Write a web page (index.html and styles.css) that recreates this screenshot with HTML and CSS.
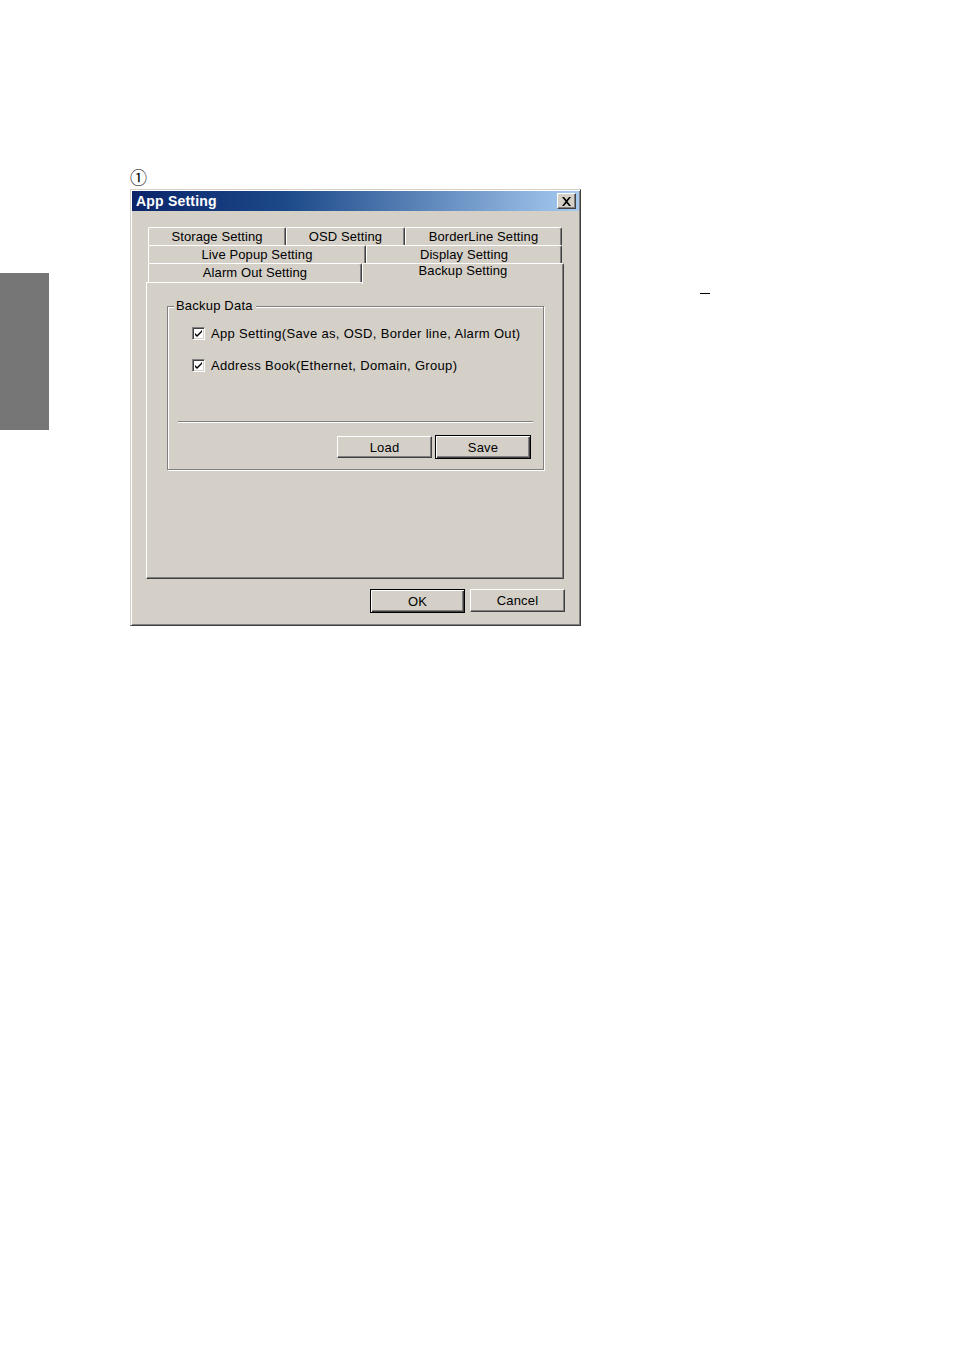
FILE: index.html
```html
<!DOCTYPE html>
<html>
<head>
<meta charset="utf-8">
<link rel="stylesheet" href="styles.css">
</head>
<body>
<div class="page">
  <div class="side"><div class="sidebar"></div></div>
  <div class="main">
    <div class="num">①</div>
    <div class="dialog">
      <div class="titlebar">
        <span class="title">App Setting</span>
        <span class="close"><svg width="11" height="9" viewBox="0 0 11 9"><path d="M1 0h2l2.5 3 2.5-3h2l-3.5 4.5 3.5 4.5h-2l-2.5-3-2.5 3h-2l3.5-4.5z" fill="#000"/></svg></span>
      </div>
      <div class="body">
        <div class="tabs">
          <div class="row r1">
            <div class="tab" style="width:138px">Storage Setting</div>
            <div class="tab" style="width:119px">OSD Setting</div>
            <div class="tab" style="width:157px">BorderLine Setting</div>
          </div>
          <div class="row r2">
            <div class="tab" style="width:218px">Live Popup Setting</div>
            <div class="tab" style="width:196px">Display Setting</div>
          </div>
          <div class="row r3">
            <div class="tab" style="width:214px">Alarm Out Setting</div>
            <div class="tab sel" style="width:202px">Backup Setting</div>
          </div>
        </div>
        <div class="panel">
          <div class="group">
            <div class="legend">Backup Data</div>
            <label class="chk"><span class="box"><svg width="9" height="9" viewBox="0 0 9 9"><path d="M1 4l2 2 5-5v2l-5 5-2-2z" fill="#000"/></svg></span>App Setting(Save as, OSD, Border line, Alarm Out)</label>
            <label class="chk c2"><span class="box"><svg width="9" height="9" viewBox="0 0 9 9"><path d="M1 4l2 2 5-5v2l-5 5-2-2z" fill="#000"/></svg></span>Address Book(Ethernet, Domain, Group)</label>
            <div class="sep"></div>
            <div class="btns">
              <div class="btn">Load</div>
              <div class="btn def">Save</div>
            </div>
          </div>
        </div>
        <div class="footer">
          <div class="btn def big">OK</div>
          <div class="btn big">Cancel</div>
        </div>
      </div>
    </div>
  </div>
  <div class="dash"></div>
</div>
</body>
</html>
```
FILE: styles.css
```css
html, body { margin: 0; padding: 0; background: #fff; }
body { width: 954px; height: 1348px; font-family: "Liberation Sans", Arial, sans-serif; font-size: 13px; color: #000; }
.page { display: flex; align-items: flex-start; }
.side { width: 49px; padding-top: 273px; }
.sidebar { width: 49px; height: 157px; background: #767676; }
.main { margin-left: 81px; padding-top: 166px; display: flex; flex-direction: column; }
.num { font-family: "Noto Sans CJK JP", "DejaVu Sans", sans-serif; font-size: 17px; line-height: 22px; height: 23px; margin-left: 0; }
.dash { width: 10px; height: 1px; background: #000; margin-top: 293px; margin-left: 119px; }
.dialog { width: 451px; height: 437px; box-sizing: border-box; background: #d4d0c8;
  border: 1px solid; border-color: #d4d0c8 #404040 #404040 #d4d0c8; box-shadow: inset 1px 1px 0 #fff, inset -1px -1px 0 #808080; padding: 1px; display: flex; flex-direction: column; }
.titlebar { height: 20px; background: linear-gradient(to right, #0a246a, #1d4a8a 35%, #a6caf0); display: flex; align-items: center; justify-content: space-between; padding: 0 3px 0 4px; }
.title { color: #fff; font-weight: bold; font-size: 14px; letter-spacing: 0.2px; }
.close { width: 19px; height: 16px; box-sizing: border-box; background: #d4d0c8; border: 1px solid; border-color: #fff #404040 #404040 #fff; box-shadow: inset -1px -1px 0 #808080; display: flex; align-items: center; justify-content: center; }
.body { flex: 1; padding: 16px 14px 0 14px; display: flex; flex-direction: column; }
.tabs { display: flex; flex-direction: column; padding-left: 2px; }
.row { display: flex; height: 18px; }
.r3 { height: 19px; align-items: flex-end; }
.tab { box-sizing: border-box; height: 18px; border-top: 1px solid #fff; border-left: 1px solid #fff; border-right: 1px solid #404040; box-shadow: inset -1px 0 0 #808080; border-radius: 2px 2px 0 0; text-align: center; line-height: 17px; letter-spacing: 0.1px; }
.r3 .tab { height: 19px; line-height: 18px; }
.tab.sel { height: 21px; margin-bottom: -2px; line-height: 14px; position: relative; z-index: 1; background: #d4d0c8; }
.panel { height: 297px; box-sizing: border-box; border: 1px solid; border-color: #fff #404040 #404040 #fff; box-shadow: inset -1px -1px 0 #808080; padding: 23px 19px 0 20px; margin-right: 1px; }
.group { position: relative; height: 164px; box-sizing: border-box; border: 1px solid #808080; box-shadow: 1px 1px 0 #fff, inset 1px 1px 0 #fff; padding: 17px 10px 0 10px; display: flex; flex-direction: column; }
.legend { position: absolute; left: 6px; top: -9px; background: #d4d0c8; padding: 0 3px 0 2px; line-height: 16px; letter-spacing: 0.2px; }
.chk { display: flex; align-items: center; margin-left: 14px; height: 18px; letter-spacing: 0.33px; }
.c2 { margin-top: 14px; }
.box { width: 13px; height: 13px; box-sizing: border-box; background: #fff; border: 1px solid; border-color: #808080 #fff #fff #808080; box-shadow: inset 1px 1px 0 #404040, inset -1px -1px 0 #d4d0c8; display: flex; align-items: center; justify-content: center; margin-right: 6px; }
.sep { height: 1px; background: #808080; border-bottom: 1px solid #fff; margin-top: 47px; }
.btns { display: flex; justify-content: flex-end; gap: 3px; margin-top: 13px; margin-right: 2px; }
.btn { width: 95px; height: 22px; box-sizing: border-box; border: 1px solid; border-color: #fff #404040 #404040 #fff; box-shadow: inset -1px -1px 0 #808080; display: flex; align-items: center; justify-content: center; letter-spacing: 0.2px; }
.btn.def { border: 1px solid #000; box-shadow: inset 1px 1px 0 #fff, inset -1px -1px 0 #404040, inset -2px -2px 0 #808080; height: 24px; margin-top: -1px; width: 96px; }
.footer { display: flex; justify-content: flex-end; gap: 5px; margin-top: 10px; margin-right: 0; }
.big { height: 23px; }
.footer .btn.def { width: 95px; height: 24px; margin-top: 0; }
```
